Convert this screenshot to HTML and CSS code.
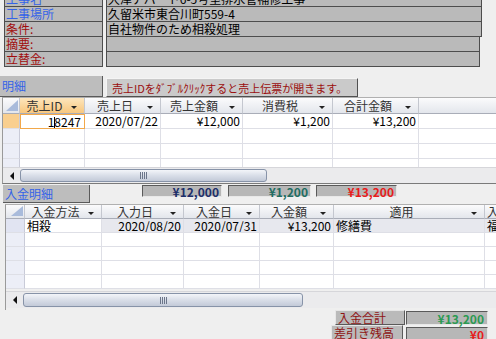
FILE: index.html
```html
<!DOCTYPE html>
<html lang="ja">
<head>
    <meta charset="UTF-8">
    <title>売上・入金明細</title>
    <link rel="stylesheet" href="styles.css">
</head>
<body>
    <div class="form">
        <div class="field">
            <div class="field-label blue">工事名</div>
            <div class="field-value wide">大津アパート6-5号室排水管補修工事</div>
        </div>
        <div class="field">
            <div class="field-label blue">工事場所</div>
            <div class="field-value wide">久留米市東合川町559-4</div>
        </div>
        <div class="field">
            <div class="field-label red">条件:</div>
            <div class="field-value wide">自社物件のため相殺処理</div>
        </div>
        <div class="field">
            <div class="field-label red">摘要:</div>
            <div class="field-value"></div>
        </div>
        <div class="field">
            <div class="field-label red">立替金:</div>
            <div class="field-value"></div>
        </div>
    </div>

    <div class="section-bar">
        <div class="section-label">明細</div>
        <button class="hint">売上IDをﾀﾞﾌﾞﾙｸﾘｯｸすると売上伝票が開きます。</button>
    </div>

    <div class="sheet sales">
        <div class="row head">
            <div class="cell sel"><svg width="12" height="11"><polygon points="12,0 12,11 0,11" fill="#a9bbdb"/></svg></div>
            <div class="cell hd active-col"><span>売上ID</span><i class="dd"></i></div>
            <div class="cell hd"><span>売上日</span><i class="dd"></i></div>
            <div class="cell hd"><span>売上金額</span><i class="dd"></i></div>
            <div class="cell hd"><span>消費税</span><i class="dd"></i></div>
            <div class="cell hd"><span>合計金額</span><i class="dd"></i></div>
            <div class="cell hd"><span>摘要</span></div>
        </div>
        <div class="body">
            <div class="row">
                <div class="cell sel current"></div>
                <div class="cell num editing">1<b class="caret"></b>8247</div>
                <div class="cell num">2020/07/22</div>
                <div class="cell num">¥12,000</div>
                <div class="cell num">¥1,200</div>
                <div class="cell num">¥13,200</div>
                <div class="cell"></div>
            </div>
            <div class="row">
                <div class="cell sel"></div><div class="cell"></div><div class="cell"></div><div class="cell"></div><div class="cell"></div><div class="cell"></div><div class="cell"></div>
            </div>
            <div class="row">
                <div class="cell sel"></div><div class="cell"></div><div class="cell"></div><div class="cell"></div><div class="cell"></div><div class="cell"></div><div class="cell"></div>
            </div>
            <div class="row">
                <div class="cell sel"></div><div class="cell"></div><div class="cell"></div><div class="cell"></div><div class="cell"></div><div class="cell"></div><div class="cell"></div>
            </div>
        </div>
        <div class="hscroll">
            <div class="arrow"><i></i></div>
            <div class="thumb"><span class="grip"></span></div>
        </div>
    </div>

    <div class="totals-bar">
        <div class="section-label short">入金明細</div>
        <div class="sum navy">¥12,000</div>
        <div class="sum teal">¥1,200</div>
        <div class="sum red-sum">¥13,200</div>
    </div>

    <div class="sheet payments">
        <div class="row head">
            <div class="cell sel"><svg width="12" height="10"><polygon points="12,0 12,10 0,10" fill="#a9bbdb"/></svg></div>
            <div class="cell hd"><span>入金方法</span><i class="dd"></i></div>
            <div class="cell hd"><span>入力日</span><i class="dd"></i></div>
            <div class="cell hd"><span>入金日</span><i class="dd"></i></div>
            <div class="cell hd"><span>入金額</span><i class="dd"></i></div>
            <div class="cell hd"><span>適用</span><i class="dd"></i></div>
            <div class="cell hd left"><span>入</span></div>
        </div>
        <div class="body">
            <div class="row picked">
                <div class="cell sel"></div>
                <div class="cell plain">相殺</div>
                <div class="cell num">2020/08/20</div>
                <div class="cell num">2020/07/31</div>
                <div class="cell num">¥13,200</div>
                <div class="cell">修繕費</div>
                <div class="cell">福</div>
            </div>
            <div class="row">
                <div class="cell sel"></div><div class="cell"></div><div class="cell"></div><div class="cell"></div><div class="cell"></div><div class="cell"></div><div class="cell"></div>
            </div>
            <div class="row">
                <div class="cell sel"></div><div class="cell"></div><div class="cell"></div><div class="cell"></div><div class="cell"></div><div class="cell"></div><div class="cell"></div>
            </div>
            <div class="row">
                <div class="cell sel"></div><div class="cell"></div><div class="cell"></div><div class="cell"></div><div class="cell"></div><div class="cell"></div><div class="cell"></div>
            </div>
            <div class="row">
                <div class="cell sel"></div><div class="cell"></div><div class="cell"></div><div class="cell"></div><div class="cell"></div><div class="cell"></div><div class="cell"></div>
            </div>
        </div>
        <div class="hscroll">
            <div class="arrow"><i></i></div>
            <div class="thumb"><span class="grip"></span></div>
        </div>
    </div>

    <div class="summary">
        <div class="sum-row">
            <div class="sum-label">入金合計</div>
            <div class="sum-value green">¥13,200</div>
        </div>
        <div class="sum-row second">
            <div class="sum-label">差引き残高</div>
            <div class="sum-value red-sum">¥0</div>
        </div>
    </div>
</body>
</html>
```

FILE: styles.css
```css
body {
    margin: 0;
    width: 496px;
    height: 339px;
    overflow: hidden;
    background-color: #efefef;
    font-family: "Noto Sans CJK JP", sans-serif;
    font-size: 12px;
    color: #000;
}

/* header form fields */
.form {
    margin-top: -9px;
}
.field {
    display: flex;
    height: 16px;
    margin-bottom: -1px;
}
.field-label,
.field-value {
    box-sizing: border-box;
    height: 16px;
    line-height: 14px;
    background: #bababa;
    border: 1px solid #4d4d4d;
    padding-left: 1px;
    white-space: nowrap;
    overflow: hidden;
}
.field-label {
    width: 99px;
    margin-left: 4px;
}
.field-value {
    width: 374px;
    margin-left: 3px;
}
.field-value.wide {
    width: 376px;
}
.blue { color: #3463e8; }
.red { color: #a00c0c; }

/* section bars */
.section-bar {
    display: flex;
    align-items: flex-end;
    margin-top: 10px;
    height: 21px;
}
.section-label {
    box-sizing: border-box;
    width: 103px;
    height: 21px;
    line-height: 20px;
    padding-left: 2px;
    background: #bdbdbd;
    border-right: 1px solid #5a5a5a;
    border-bottom: 1px solid #5a5a5a;
    color: #3463e8;
}
.hint {
    box-sizing: border-box;
    margin-left: 3px;
    height: 19px;
    width: 252px;
    padding: 0 0 0 5px;
    text-align: left;
    font-family: inherit;
    font-size: 11px;
    line-height: 16px;
    color: #9a0e0e;
    background: #cacaca;
    border: 1px solid;
    border-color: #f4f4f4 #505050 #505050 #f4f4f4;
    white-space: nowrap;
}

/* datasheets */
.sheet {
    border-left: 1px solid #9a9a9a;
    border-top: 1px solid #b0b0b0;
    width: 600px;
}
.sales {
    margin-left: 2px;
    border-bottom: 1px solid #7a7a7a;
}
.payments {
    margin-left: 5px;
    padding-bottom: 2px;
}
.row {
    display: grid;
    height: 14px;
}
.sales .row {
    grid-template-columns: 17px 65px 76px 82px 90px 86px 184px;
}
.payments .row {
    grid-template-columns: 19px 77px 82px 76px 74px 151px 121px;
}
.cell {
    box-sizing: border-box;
    border-right: 1px solid #dedfe6;
    border-bottom: 1px solid #dedfe6;
    line-height: 13px;
    padding: 0 2px;
    white-space: nowrap;
    overflow: hidden;
    background: #fff;
}
.cell.num {
    text-align: right;
}
.cell.sel {
    background: #eceef7;
    border-right-color: #c9cbd8;
}
.head {
    height: 16px;
}
.payments .head {
    height: 14px;
}
.head .cell {
    display: flex;
    align-items: center;
    background: linear-gradient(#fbfbfc, #e3e6ec);
    border-right: 1px solid #c4c7cf;
    border-bottom: 1px solid #a9adb8;
    color: #333;
}
.head .cell.sel {
    justify-content: flex-end;
    align-items: flex-end;
    padding: 0 1px 2px 0;
}
.hd span {
    flex: 1;
    text-align: center;
}
.hd.left span {
    text-align: left;
}
.head .active-col {
    background: linear-gradient(#fde6bd, #f8c77e);
}
.dd {
    width: 0;
    height: 0;
    margin: 3px 5px 0 4px;
    border-left: 3px solid transparent;
    border-right: 3px solid transparent;
    border-top: 3px solid #222;
}
.sales .body {
    height: 53px;
    overflow: hidden;
}
.sales .body .row {
    height: 15px;
}
.sales .body .row .cell {
    line-height: 14px;
}
.payments .body {
    height: 72px;
    overflow: hidden;
}
.payments .body .row {
    height: 14px;
}
.cell.sel.current {
    background: #f9cf8f;
}
.cell.editing {
    border: 1px solid #f2a84a;
    padding-right: 3px;
}
.caret {
    display: inline-block;
    width: 1px;
    height: 11px;
    margin: 0 -1px 0 0;
    vertical-align: -1px;
    background: #000;
}
.picked .cell {
    background: #e7e8ee;
}
.picked .cell.sel {
    background: #e1e4f2;
}
.picked .cell.plain {
    background: #fff;
}

/* horizontal scrollbar */
.hscroll {
    display: flex;
    height: 15px;
    background: #ebebed;
    border-top: 1px solid #d6d6da;
}
.payments .hscroll {
    height: 16px;
}
.arrow {
    width: 17px;
    display: flex;
    align-items: center;
    justify-content: center;
}
.arrow i {
    width: 0;
    height: 0;
    border-top: 4px solid transparent;
    border-bottom: 4px solid transparent;
    border-right: 4px solid #111;
}
.thumb {
    box-sizing: border-box;
    width: 247px;
    margin: 1px 0;
    border: 1px solid #8793a8;
    border-radius: 3px;
    background: linear-gradient(#f3f5f9, #d9dee8 50%, #c3cad8);
    display: flex;
    align-items: center;
    justify-content: center;
}
.payments .thumb {
    width: 280px;
}
.grip {
    width: 7px;
    height: 7px;
    background: repeating-linear-gradient(90deg, #6c768a 0 1px, transparent 1px 2px);
}

/* totals between the sheets */
.totals-bar {
    display: flex;
    height: 20px;
}
.totals-bar .section-label.short {
    width: 87px;
    height: 18px;
    line-height: 17px;
    margin: 1px 0 0 3px;
}
.sum {
    box-sizing: border-box;
    height: 12px;
    margin-top: 1px;
    line-height: 11px;
    text-align: right;
    font-weight: 700;
    padding-right: 2px;
    background: #b7b7b7;
    border: 1px solid;
    border-color: #5a5a5a #e8e8e8 #e8e8e8 #5a5a5a;
}
.navy { width: 80px; margin-left: 52px; color: #1d2f6a; }
.teal { width: 83px; margin-left: 6px; color: #1f6d62; }
.sum.red-sum { width: 81px; margin-left: 5px; }
.red-sum { color: #e81c1c; }

/* bottom summary */
.summary {
    display: flex;
    flex-direction: column;
    align-items: flex-end;
    padding-right: 8px;
}
.sum-row {
    display: flex;
    align-items: flex-end;
    height: 15px;
}
.sum-label {
    box-sizing: border-box;
    width: 70px;
    height: 15px;
    line-height: 14px;
    padding-left: 2px;
    background: #bababa;
    border: 1px solid;
    border-color: #e6e6e6 #5a5a5a #5a5a5a #e6e6e6;
    color: #8f1414;
}
.sum-value {
    box-sizing: border-box;
    width: 82px;
    height: 14px;
    margin-left: 1px;
    line-height: 13px;
    text-align: right;
    font-weight: 700;
    padding-right: 3px;
    background: #b7b7b7;
    border: 1px solid;
    border-color: #5a5a5a #e8e8e8 #e8e8e8 #5a5a5a;
}
.second .sum-label {
    width: 72px;
    margin-right: 2px;
}
.second .sum-value {
    height: 13px;
}
.green { color: #2b9a52; }
```
